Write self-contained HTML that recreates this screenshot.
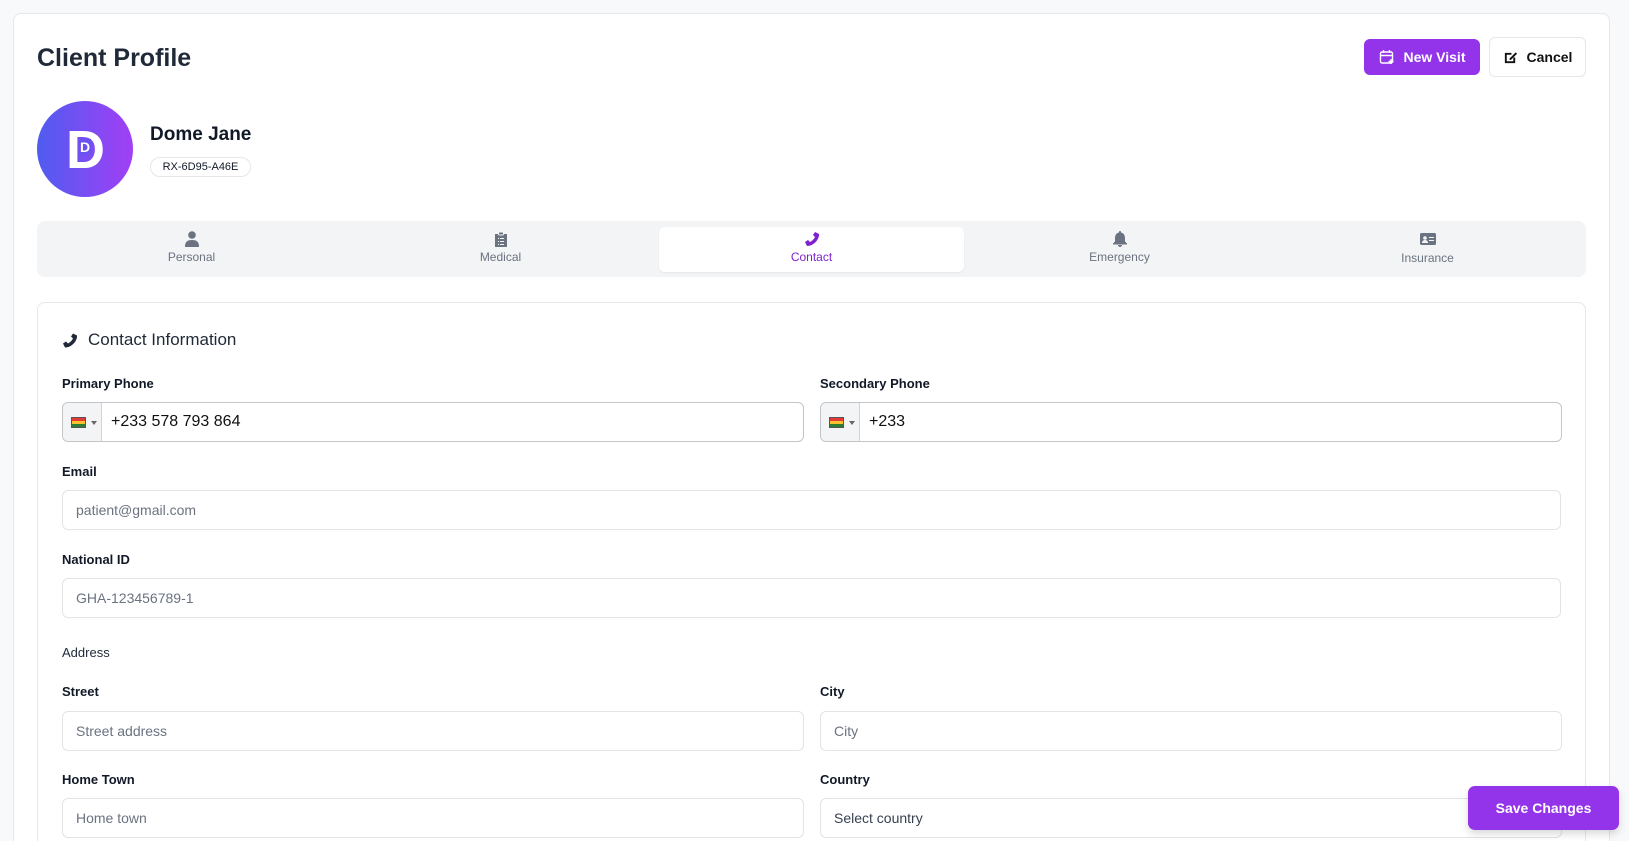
<!DOCTYPE html>
<html style="overflow:hidden;height:841px"><head><meta charset="utf-8"><style>
*{box-sizing:border-box;margin:0;padding:0}
body{width:1629px;height:841px;overflow:hidden;background:#f8f9fb;font-family:"Liberation Sans",sans-serif;color:#111827;position:relative}
.abs{position:absolute}
.card{left:13px;top:13px;width:1597px;height:840px;background:#fff;border:1px solid #e5e7eb;border-radius:8px;border-bottom:none}
h1{position:absolute;left:37px;top:44px;font-size:25px;font-weight:700;color:#1f2937}
.btn{position:absolute;display:flex;align-items:center;justify-content:center;gap:9px;font-size:14px;font-weight:700;border-radius:6px}
.av{left:37px;top:101px;width:96px;height:96px;border-radius:50%;background:linear-gradient(90deg,#4f5cf0,#a23ff5)}
.tabs{left:37px;top:221px;width:1549px;height:56px;background:#f3f4f6;border-radius:8px}
.tab{position:absolute;top:0;height:56px;width:309px;text-align:center;font-size:12px;color:#6b7280}
.tab svg{display:block;margin:10px auto 3px}
.sec{left:37px;top:302px;width:1549px;height:539px;border:1px solid #e5e7eb;border-bottom:none;border-radius:8px 8px 0 0;background:#fff}
.lbl{position:absolute;font-size:13px;font-weight:700;color:#111827}
.in{position:absolute;height:40px;border:1px solid #e2e4e8;border-radius:6px;background:#fff;font-size:14px;color:#6b7280;padding-left:13px;line-height:38px;width:742px}
.ph{border-color:#c3c5c9;color:#111;font-size:16px;padding-left:0}
.flag{display:inline-block;vertical-align:top;width:39px;height:38px;background:#f3f4f6;border-right:1px solid #d1d5db;border-radius:6px 0 0 6px;position:relative;margin-right:9px}
.flag i{position:absolute;left:8px;top:14px;width:15px;height:11px;background:linear-gradient(#e53935 0 33%,#fbc02d 33% 66%,#2e7d32 66%);border:1px solid #555}
.flag b{position:absolute;left:28px;top:18px;border:3px solid transparent;border-top:4px solid #666}
</style></head><body>
<div class="abs card"></div>
<h1>Client Profile</h1>
<div class="btn" style="left:1364px;top:39px;width:116px;height:36px;background:#9333ea;color:#fff">
<svg width="16" height="16" viewBox="0 0 16 16" fill="none" stroke="#fff" stroke-width="1.4"><rect x="1.5" y="3" width="12" height="11" rx="1.5"/><path d="M4.5 1v3M10.5 1v3M1.5 6.5h12M12 10v5M9.5 12.5h5"/></svg>New Visit</div>
<div class="btn" style="left:1489px;top:37px;width:97px;height:40px;background:#fff;border:1px solid #e5e7eb;color:#111">
<svg width="15" height="15" viewBox="0 0 16 16"><path d="M2 3h7v2H4v7h7V8h2v6H2z" fill="#111"/><path d="M7 9l6.5-6.5 1.5 1.5L8.5 10.5H7z" fill="#111"/></svg>Cancel</div>
<div class="abs av"></div>
<div class="abs" style="left:66px;top:120px;font-size:54px;font-weight:700;color:#fff;line-height:60px">D</div>
<div class="abs" style="left:79px;top:139px;font-size:14px;font-weight:700;color:#fff;background:#6a52f0;line-height:16px;padding:0 1px">D</div>
<div class="abs" style="left:150px;top:124px;font-size:19px;font-weight:700;color:#111827">Dome Jane</div>
<div class="abs" style="left:150px;top:157px;width:101px;height:20px;border:1px solid #e5e7eb;border-radius:10px;font-size:11px;text-align:center;line-height:18px">RX-6D95-A46E</div>
<div class="abs tabs">
<div class="tab" style="left:0"><svg width="14" height="16" viewBox="0 0 14 16" fill="#6b7280"><circle cx="7" cy="4" r="3.8"/><path d="M0 16c0-5 2-7 7-7s7 2 7 7z"/></svg>Personal</div>
<div class="tab" style="left:309px"><svg width="12" height="16" viewBox="0 0 12 16" fill="#6b7280"><path d="M0 3h12v13H0z"/><rect x="3.5" y="1" width="5" height="3" rx="1" fill="#6b7280" stroke="#f3f4f6"/><path d="M3 7h1v1H3zM5 7h4v1H5zM3 10h1v1H3zM5 10h4v1H5zM3 13h1v1H3zM5 13h4v1H5z" fill="#f3f4f6"/></svg>Medical</div>
<div class="tab" style="left:622px;top:6px;height:45px;width:305px;background:#fff;border-radius:6px;box-shadow:0 1px 2px rgba(0,0,0,.06);color:#7e22ce"><svg style="margin-top:4px" width="16" height="16" viewBox="0 0 16 16" fill="#7e22ce"><path d="M11 1l4 2c.5 5-5 12-12 12l-2-4 3-2 2 2c2-1 4-3 5-5l-2-2z"/></svg>Contact</div>
<div class="tab" style="left:928px"><svg width="14" height="16" viewBox="0 0 14 16" fill="#6b7280"><path d="M7 0c1 0 1 1 1 1.5 3 .7 4 3 4 6v3l2 2v1H0v-1l2-2v-3c0-3 1-5.3 4-6C6 1 6 0 7 0zM5 14h4c0 1-1 2-2 2s-2-1-2-2z"/></svg>Emergency</div>
<div class="tab" style="left:1236px"><svg style="margin-top:11px;margin-bottom:5px" width="16" height="14" viewBox="0 0 16 14" fill="#6b7280"><rect y="1" width="16" height="12" rx="1.5"/><circle cx="5" cy="6" r="1.8" fill="#f3f4f6"/><path d="M2 11c0-2 1.5-3 3-3s3 1 3 3zM9 5h5v1H9zM9 8h5v1H9z" fill="#f3f4f6"/></svg>Insurance</div>
</div>
<div class="abs sec"></div>
<svg class="abs" style="left:62px;top:332px" width="16" height="17" viewBox="0 0 16 16" fill="#1f2937"><path d="M11 1l4 2c.5 5-5 12-12 12l-2-4 3-2 2 2c2-1 4-3 5-5l-2-2z"/></svg>
<div class="abs" style="left:88px;top:330px;font-size:17px;color:#1f2937">Contact Information</div>
<div class="lbl" style="left:62px;top:376px">Primary Phone</div>
<div class="lbl" style="left:820px;top:376px">Secondary Phone</div>
<div class="in ph" style="left:62px;top:402px"><span class="flag"><i></i><b></b></span>+233 578 793 864</div>
<div class="in ph" style="left:820px;top:402px"><span class="flag"><i></i><b></b></span>+233</div>
<div class="lbl" style="left:62px;top:464px">Email</div>
<div class="in" style="left:62px;top:490px;width:1499px">patient@gmail.com</div>
<div class="lbl" style="left:62px;top:552px">National ID</div>
<div class="in" style="left:62px;top:578px;width:1499px">GHA-123456789-1</div>
<div class="lbl" style="left:62px;top:645px;font-weight:400;color:#1f2937">Address</div>
<div class="lbl" style="left:62px;top:684px">Street</div>
<div class="lbl" style="left:820px;top:684px">City</div>
<div class="in" style="left:62px;top:711px">Street address</div>
<div class="in" style="left:820px;top:711px">City</div>
<div class="lbl" style="left:62px;top:772px">Home Town</div>
<div class="lbl" style="left:820px;top:772px">Country</div>
<div class="in" style="left:62px;top:798px">Home town</div>
<div class="in" style="left:820px;top:798px;color:#374151">Select country</div>
<div class="btn" style="left:1468px;top:786px;width:151px;height:44px;background:#9333ea;color:#fff;border-radius:7px;box-shadow:0 4px 8px rgba(0,0,0,.15)">Save Changes</div>
</body></html>
